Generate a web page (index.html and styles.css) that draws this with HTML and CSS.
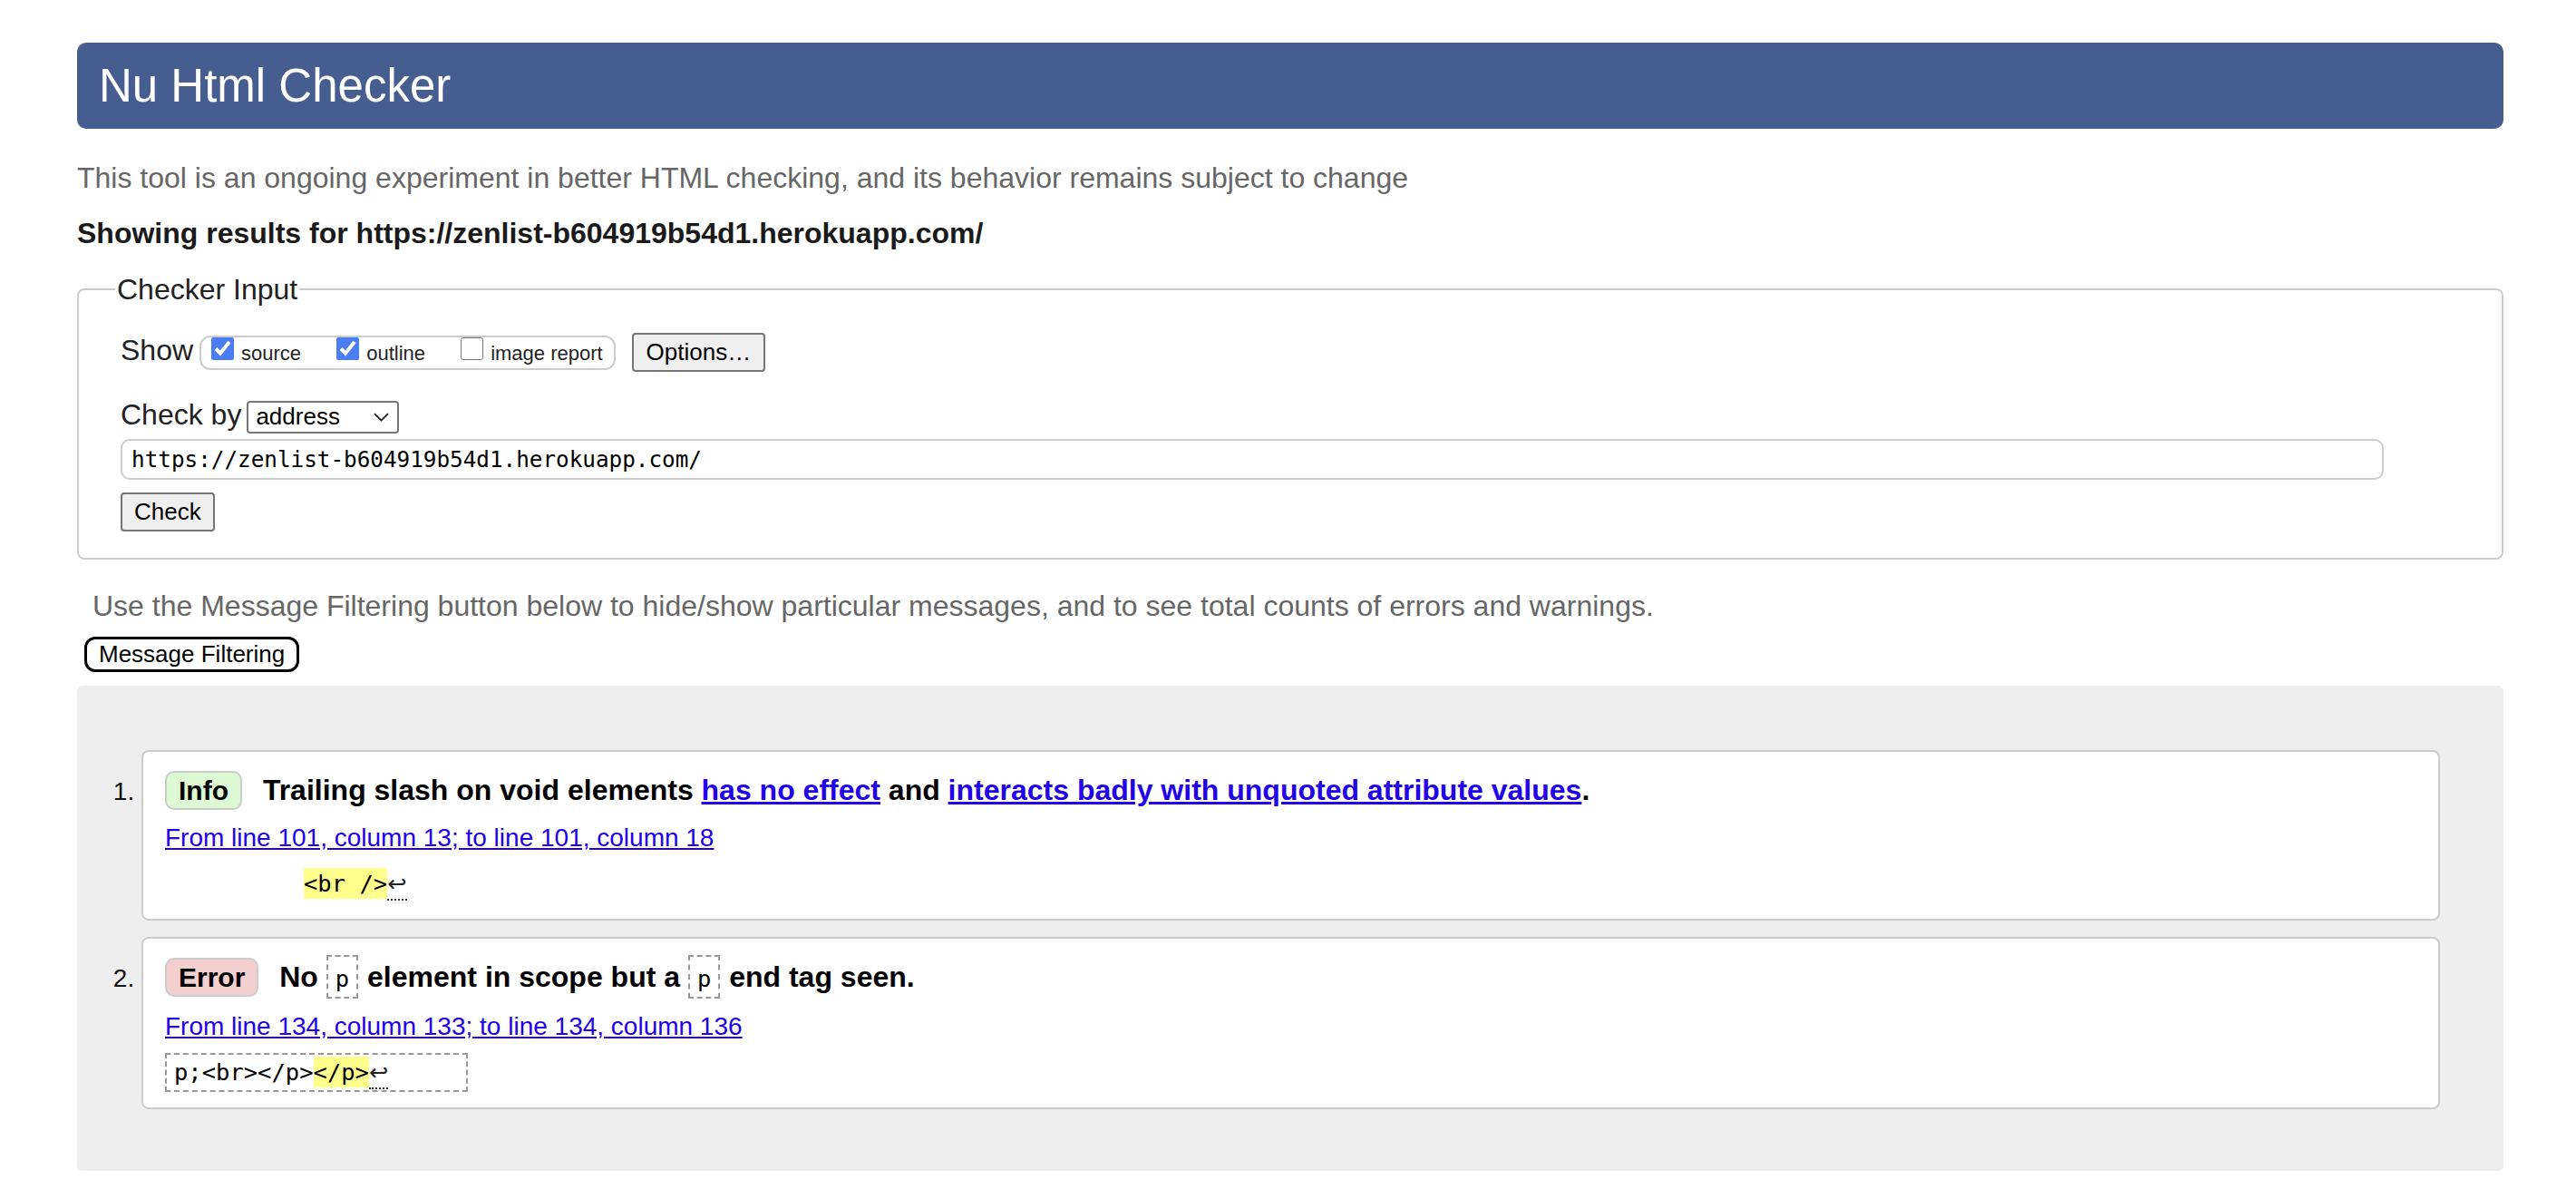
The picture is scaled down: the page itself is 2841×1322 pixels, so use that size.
FILE: index.html
```html
<!DOCTYPE html>
<html lang="en">
<head>
<meta charset="utf-8">
<title>Showing results for https://zenlist-b604919b54d1.herokuapp.com/ - Nu Html Checker</title>
<link rel="stylesheet" href="styles.css">
</head>
<body>
<h1 class="title">Nu Html Checker</h1>
<p class="intro">This tool is an ongoing experiment in better HTML checking, and its behavior remains subject to change</p>
<p class="results-for">Showing results for https://zenlist-b604919b54d1.herokuapp.com/</p>
<form class="checker">
  <fieldset class="checker-input">
    <legend class="checker-legend">Checker Input</legend>
    <div class="show-row">Show <span class="show-opts"><label class="opt"><input type="checkbox" class="cb" checked> source</label><label class="opt"><input type="checkbox" class="cb" checked> outline</label><label class="opt"><input type="checkbox" class="cb"> image report</label></span> <button type="button" class="btn btn-options">Options…</button></div>
    <div class="by-row">Check by<span class="select"><span class="select-value">address</span><svg class="chevron" viewBox="0 0 17 10" width="17" height="10"><path d="M1 1.2 L8.5 8.6 L16 1.2" fill="none" stroke="#1a1a1a" stroke-width="1.8"/></svg></span></div>
    <div class="url-row"><input class="url" type="text" value="https://zenlist-b604919b54d1.herokuapp.com/"></div>
    <div class="check-row"><button type="button" class="btn btn-check">Check</button></div>
  </fieldset>
</form>
<p class="filter-note">Use the Message Filtering button below to hide/show particular messages, and to see total counts of errors and warnings.</p>
<button type="button" class="filter-btn">Message Filtering</button>
<div class="results">
  <ol class="messages">
    <li class="msg">
      <p class="msg-text"><strong class="badge badge-info">Info</strong> <span>Trailing slash on void elements <a href="#">has no effect</a> and <a href="#">interacts badly with unquoted attribute values</a>.</span></p>
      <p class="location"><a href="#">From line 101, column 13; to line 101, column 18</a></p>
      <p class="extract"><code class="extract-code extract-indent"><b class="hl">&lt;br /&gt;</b><span class="lf">↩</span></code></p>
    </li>
    <li class="msg">
      <p class="msg-text"><strong class="badge badge-error">Error</strong> <span>No <code class="tag">p</code> element in scope but a <code class="tag">p</code> end tag seen.</span></p>
      <p class="location"><a href="#">From line 134, column 133; to line 134, column 136</a></p>
      <p class="extract"><code class="extract-code extract-box">p;&lt;br&gt;&lt;/p&gt;<b class="hl">&lt;/p&gt;</b><span class="lf">↩</span></code></p>
    </li>
  </ol>
</div>
</body>
</html>
```

FILE: styles.css
```css
html {
  background: #fff;
}

body {
  margin: 0;
  padding: 47px 80px 30px 85px;
  font-family: "Liberation Sans", Arial, sans-serif;
  font-size: 32px;
  line-height: 34px;
  color: #222;
}

.title {
  margin: 0;
  height: 95px;
  line-height: 95px;
  padding: 0 24px;
  background: #455d8f;
  color: #fff;
  font-size: 51px;
  font-weight: normal;
  border-radius: 10px;
}

.intro {
  margin: 37px 0 0;
  color: #666;
}

.results-for {
  margin: 27px 0 0;
  font-weight: bold;
  color: #1a1a1a;
}

.checker {
  margin: 28px 0 0;
}

.checker-input {
  margin: 0;
  min-width: 0;
  padding: 0 130px 29px 46px;
  border: 2px solid #ccc;
  border-radius: 8px;
}

.checker-legend {
  margin-left: -6px;
  padding: 0 2px;
  line-height: 34px;
  color: #222;
}

.show-row {
  margin-top: 31px;
}

.show-opts {
  display: inline-flex;
  align-items: baseline;
  gap: 39px;
  margin-left: -2px;
  padding: 0 12px 3px 11px;
  border: 2px solid #ccc;
  border-radius: 12px;
  font-size: 22px;
  line-height: normal;
}

.opt {
  white-space: nowrap;
}

.cb {
  width: 25px;
  height: 25px;
  margin: 0 2px 0 0;
  accent-color: #4a7cf2;
}

.btn {
  font-family: "Liberation Sans", Arial, sans-serif;
  font-size: 26px;
  line-height: normal;
  color: #000;
  background: #efefef;
  border: 2px solid #767676;
  border-radius: 4px;
  padding: 4px 14px;
}

.btn-options {
  margin-left: 9px;
}

.by-row {
  margin-top: 30px;
}

.select {
  display: inline-flex;
  align-items: center;
  justify-content: space-between;
  box-sizing: border-box;
  width: 168px;
  height: 36px;
  margin-left: 6px;
  padding: 0 9px 0 8px;
  border: 2px solid #767676;
  border-radius: 4px;
  font-size: 26px;
  line-height: normal;
  color: #000;
  vertical-align: baseline;
}

.chevron {
  display: block;
}

.url-row {
  margin-top: 6px;
}

.url {
  display: block;
  box-sizing: border-box;
  width: 100%;
  height: 45px;
  margin: 0;
  padding: 0 10px;
  border: 2px solid #ccc;
  border-radius: 10px;
  font-family: "DejaVu Sans Mono", "Liberation Mono", monospace;
  font-size: 24.3px;
  color: #000;
  background: #fff;
}

.check-row {
  display: flex;
  margin-top: 14px;
}

.btn-check {
  padding: 4px 13px;
}

.filter-note {
  margin: 34px 0 0 17px;
  color: #666;
}

.filter-btn {
  display: block;
  margin: 17px 0 0 8px;
  padding: 1px 13px;
  font-family: "Liberation Sans", Arial, sans-serif;
  font-size: 26px;
  line-height: normal;
  color: #000;
  background: #fff;
  border: 3px solid #000;
  border-radius: 12px;
}

.results {
  margin-top: 15px;
  padding: 71px 70px 68px 71px;
  background: #eee;
  border-radius: 6px;
}

.messages {
  margin: 0;
  padding: 0;
  list-style: decimal outside;
}

.msg {
  margin: 0 0 18px;
  padding: 18px 24px 22px;
  background: #fff;
  border: 2px solid #ccc;
  border-radius: 8px;
  font-size: 28px;
  color: #111;
}

.msg:last-child {
  margin-bottom: 0;
}

.msg-text {
  margin: 0;
  font-size: 32px;
  font-weight: bold;
  line-height: 48px;
  color: #000;
}

.badge {
  display: inline-block;
  margin-right: 14px;
  padding: 2px 13px;
  font-size: 30px;
  line-height: 35px;
  border: 2px solid #ccc;
  border-radius: 10px;
  color: #000;
}

.badge-info {
  background: #dcf9d4;
}

.badge-error {
  background: #f3d0cf;
}

.msg a {
  color: #2200e8;
  text-decoration: underline;
}

.tag {
  margin: 0 1px 0 0;
  padding: 9px 8px 5px;
  border: 2px dashed #999;
  font-family: "DejaVu Sans Mono", "Liberation Mono", monospace;
  font-size: 25.5px;
  font-weight: normal;
}

.location {
  margin: 12px 0 0;
  font-size: 28px;
  line-height: 34px;
}

.extract {
  margin: 17px 0 0;
  font-family: "DejaVu Sans Mono", "Liberation Mono", monospace;
  font-size: 25.5px;
  line-height: 33px;
  white-space: pre;
}

.extract-code {
  font-family: inherit;
  font-size: inherit;
  color: #000;
}

.extract-indent {
  padding-left: 153px;
}

.extract-box {
  display: inline-block;
  box-sizing: border-box;
  width: 334px;
  margin: -6px 0 -5px;
  padding: 3px 8px;
  border: 2px dashed #999;
}

.hl {
  font-weight: normal;
  background: #ffff8c;
  padding: 2px 0;
}

.lf {
  font-family: "DejaVu Sans", sans-serif;
  color: #222;
  padding-bottom: 2px;
  border-bottom: 2px dotted #333;
}
```
